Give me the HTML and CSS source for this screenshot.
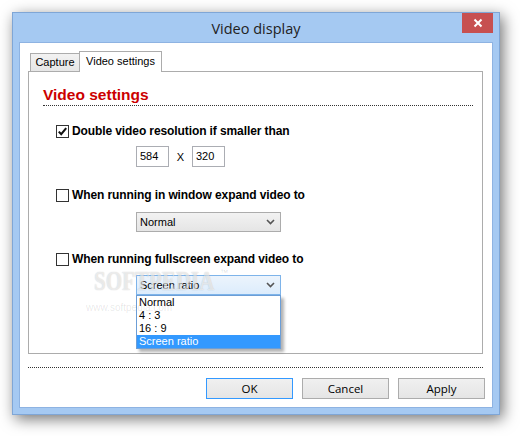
FILE: index.html
```html
<!DOCTYPE html>
<html>
<head>
<meta charset="utf-8">
<title>Video display</title>
<link rel="stylesheet" href="styles.css">
</head>
<body>
<div class="window">
  <div class="titlebar">
    <span></span>
    <span class="title">Video display</span>
    <span class="close"><svg width="10" height="10" viewBox="0 0 10 10"><path d="M1.5 1.5 L8.5 8.5 M8.5 1.5 L1.5 8.5" stroke="#fff" stroke-width="2" fill="none"/></svg></span>
  </div>
  <div class="client">
    <div class="tabs">
      <div class="tab">Capture</div>
      <div class="tab active">Video settings</div>
    </div>
    <div class="panel">
      <h1 class="heading">Video settings</h1>
      <div class="row first">
        <span class="check"><svg width="11" height="11" viewBox="0 0 11 11"><path d="M1.8 5.6 L4.2 8.2 L9.2 2.2" stroke="#111" stroke-width="2.1" fill="none"/></svg></span>
        <span class="label">Double video resolution if smaller than</span>
      </div>
      <div class="sizes">
        <span class="field">584</span>
        <span class="times">X</span>
        <span class="field">320</span>
      </div>
      <div class="row second">
        <span class="check"></span>
        <span class="label">When running in window expand video to</span>
      </div>
      <div class="combo">
        <span>Normal</span>
        <svg class="chev" width="9" height="6" viewBox="0 0 9 6"><path d="M1 1 L4.5 4.5 L8 1" stroke="#555" stroke-width="1.6" fill="none"/></svg>
      </div>
      <div class="row third">
        <span class="check"></span>
        <span class="label">When running fullscreen expand video to</span>
      </div>
      <div class="combo open">
        <span>Screen ratio</span>
        <svg class="chev" width="9" height="6" viewBox="0 0 9 6"><path d="M1 1 L4.5 4.5 L8 1" stroke="#555" stroke-width="1.6" fill="none"/></svg>
        <ul class="list">
          <li>Normal</li>
          <li>4 : 3</li>
          <li>16 : 9</li>
          <li class="sel">Screen ratio</li>
        </ul>
      </div>
    </div>
    <div class="footer">
      <button class="btn default">OK</button>
      <button class="btn">Cancel</button>
      <button class="btn">Apply</button>
    </div>
  </div>
</div>
<div class="watermark">
  <span class="wm-big">SOFTPEDIA</span><span class="wm-tm">™</span>
  <span class="wm-small">www.softpedia.com</span>
</div>
</body>
</html>
```

FILE: styles.css
```css
html, body {
  margin: 0;
  padding: 0;
  background: #fff;
}
body {
  font-family: "Liberation Sans", Arial, sans-serif;
  font-size: 11px;
  color: #000;
  position: relative;
  width: 520px;
  height: 436px;
  overflow: hidden;
}
.window {
  margin: 12px 0 0 12px;
  width: 488px;
  height: 403px;
  box-sizing: border-box;
  border: 1px solid #7fa6d6;
  background: #a5c9f2;
  display: flex;
  flex-direction: column;
  box-shadow: 3px 4px 14px rgba(0, 0, 0, 0.55);
}
.titlebar {
  height: 29px;
  display: grid;
  grid-template-columns: 1fr auto 1fr;
  align-items: start;
}
.title {
  font-family: "Open Sans", sans-serif;
  font-size: 14.5px;
  line-height: 31px;
  color: #222;
}
.close {
  justify-self: end;
  margin-right: 6px;
  width: 31px;
  height: 20px;
  background: #c75050;
  display: flex;
  align-items: center;
  justify-content: center;
}
.close svg { display: block; }
.client {
  flex: 1;
  margin: 0 6px 6px 6px;
  border: 1px solid #8eb3e2;
  background: #fff;
  padding: 8px 0 0 0;
  display: flex;
  flex-direction: column;
}
.tabs {
  display: flex;
  align-items: flex-end;
  padding-left: 10px;
  height: 20px;
  position: relative;
  z-index: 2;
}
.tab {
  box-sizing: border-box;
  height: 18px;
  width: 49px;
  border: 1px solid #acacac;
  border-right: none;
  border-bottom: none;
  background: linear-gradient(#f2f2f2, #e6e6e6);
  line-height: 17px;
  text-align: center;
  font-size: 11px;
}
.tab.active {
  width: 83px;
  height: 21px;
  margin-bottom: -1px;
  border-right: 1px solid #acacac;
  background: #fff;
  line-height: 19px;
}
.panel {
  margin: 0 9px 0 8px;
  height: 283px;
  box-sizing: border-box;
  border: 1px solid #acacac;
  padding: 0 9px 0 14px;
  position: relative;
  z-index: 1;
}
.heading {
  margin: 13px 0 0 0;
  height: 20px;
  line-height: 20px;
  font-size: 15.5px;
  font-weight: bold;
  color: #cc0000;
  border-bottom: 1px dotted #333;
}
.row {
  display: flex;
  align-items: center;
  height: 13px;
  margin-left: 13px;
}
.row.first { margin-top: 19px; }
.row.second { margin-top: 22px; }
.row.third { margin-top: 21px; }
.check {
  box-sizing: border-box;
  width: 13px;
  height: 13px;
  border: 1px solid #333;
  background: #fff;
  display: flex;
  align-items: center;
  justify-content: center;
  flex: none;
}
.check svg { display: block; }
.label {
  margin-left: 3px;
  font-size: 12px;
  font-weight: bold;
  letter-spacing: -0.1px;
  line-height: 13px;
  white-space: nowrap;
}
.sizes {
  display: flex;
  align-items: center;
  margin: 8px 0 0 93px;
  height: 21px;
}
.field {
  box-sizing: border-box;
  width: 33px;
  height: 21px;
  border: 1px solid #abadb3;
  padding-left: 3px;
  line-height: 19px;
  font-size: 11px;
}
.times {
  width: 23px;
  text-align: center;
  font-size: 11px;
}
.combo {
  position: relative;
  box-sizing: border-box;
  width: 145px;
  height: 20px;
  margin: 10px 0 0 93px;
  border: 1px solid #acacac;
  background: linear-gradient(#f2f2f2, #e5e5e5);
  display: flex;
  align-items: center;
  justify-content: space-between;
  padding: 0 5px 0 3px;
  font-size: 11px;
}
.combo.open {
  margin-top: 9px;
  border-color: #7eb4ea;
  background: linear-gradient(#ecf4fc, #dcecfc);
}
.chev { display: block; }
.list {
  position: absolute;
  left: -1px;
  top: 19px;
  width: 145px;
  box-sizing: border-box;
  margin: 0;
  padding: 0;
  list-style: none;
  background: #fff;
  border: 1px solid #6c9ed6;
  box-shadow: 3px 3px 3px rgba(0, 0, 0, 0.3);
}
.list li {
  height: 13px;
  line-height: 13px;
  padding-left: 2px;
  font-size: 11px;
}
.list li.sel {
  background: #3399ff;
  color: #fff;
}
.footer {
  margin: 13px 7px 0 8px;
  border-top: 1px dotted #333;
  width: 455px;
  padding-top: 10px;
  display: flex;
  gap: 9px;
  justify-content: flex-end;
}
.footer .btn:last-child { margin-right: -2px; }
.btn {
  box-sizing: border-box;
  width: 87px;
  height: 21px;
  border: 1px solid #acacac;
  background: linear-gradient(#f0f0f0, #e5e5e5);
  font-family: "Open Sans", sans-serif;
  font-size: 11.5px;
  color: #000;
  padding: 0;
  margin: 0;
}
.btn.default {
  border-color: #3399ff;
}
.watermark {
  position: absolute;
  left: 94px;
  top: 268px;
  pointer-events: none;
  z-index: 10;
}
.wm-big {
  display: inline-block;
  font-family: "Liberation Serif", serif;
  font-weight: bold;
  font-size: 21px;
  line-height: 26px;
  color: rgba(255, 255, 255, 0.6);
  text-shadow: 0 0 1px rgba(0, 0, 0, 0.22);
  transform: scaleY(1.3);
  transform-origin: left center;
}
.wm-tm {
  position: absolute;
  left: 126px;
  top: 0;
  font-size: 8px;
  color: rgba(0, 0, 0, 0.15);
}
.wm-small {
  position: absolute;
  left: -8px;
  top: 34px;
  font-size: 10px;
  white-space: nowrap;
  color: rgba(0, 0, 0, 0.1);
}
```
